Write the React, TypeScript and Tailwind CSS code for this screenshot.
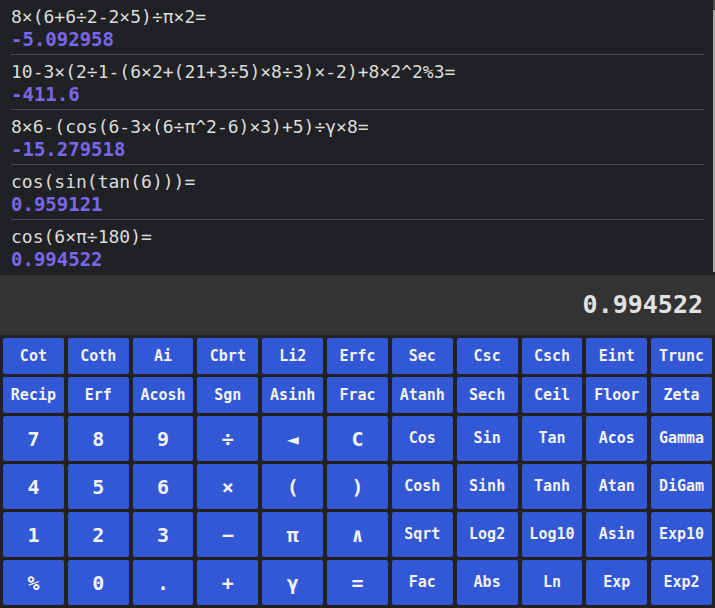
import React from "react";

const history = [
  { e: "8×(6+6÷2-2×5)÷π×2=", r: "-5.092958" },
  { e: "10-3×(2÷1-(6×2+(21+3÷5)×8÷3)×-2)+8×2^2%3=", r: "-411.6" },
  { e: "8×6-(cos(6-3×(6÷π^2-6)×3)+5)÷γ×8=", r: "-15.279518" },
  { e: "cos(sin(tan(6)))=", r: "0.959121" },
  { e: "cos(6×π÷180)=", r: "0.994522" },
];

const rows: string[][] = [
  ["Cot", "Coth", "Ai", "Cbrt", "Li2", "Erfc", "Sec", "Csc", "Csch", "Eint", "Trunc"],
  ["Recip", "Erf", "Acosh", "Sgn", "Asinh", "Frac", "Atanh", "Sech", "Ceil", "Floor", "Zeta"],
  ["7", "8", "9", "÷", "◄", "C", "Cos", "Sin", "Tan", "Acos", "Gamma"],
  ["4", "5", "6", "×", "(", ")", "Cosh", "Sinh", "Tanh", "Atan", "DiGam"],
  ["1", "2", "3", "−", "π", "∧", "Sqrt", "Log2", "Log10", "Asin", "Exp10"],
  ["%", "0", ".", "+", "γ", "=", "Fac", "Abs", "Ln", "Exp", "Exp2"],
];

const mono = { fontFamily: '"DejaVu Sans Mono", "Liberation Mono", monospace' };

export default function App() {
  return (
    <div className="w-[715px] h-[608px] flex flex-col bg-[#222222] overflow-hidden" style={mono}>
      <div className="h-[275px] flex bg-[#202124]">
        <div className="flex-1 pl-[11px] pr-[9px] overflow-hidden">
          {history.map((h, i) => (
            <div
              key={i}
              className={
                "pt-[6px] pb-[4px] " + (i < history.length - 1 ? "border-b border-[#4a4b4e]" : "")
              }
            >
              <div className="text-[18px] leading-[22px] text-[#dcdcdc] whitespace-nowrap">{h.e}</div>
              <div className="text-[19px] leading-[22px] font-bold text-[#7a66e8] whitespace-nowrap">{h.r}</div>
            </div>
          ))}
        </div>
        <div className="w-[2px] flex flex-col">
          <div className="h-[10px] bg-[#4a4a4a]" />
          <div className="h-[262px] bg-[#a8a8a8]" />
        </div>
      </div>
      <div className="h-[60px] bg-[#333333] flex items-center justify-end pr-[12px]">
        <span className="text-[25px] font-bold text-[#e2e2e2]">0.994522</span>
      </div>
      <div className="flex-1 grid grid-cols-11 grid-rows-[36px_36px_45px_45px_45px_45px] gap-x-[4px] gap-y-[3px] px-[3px] pt-[3px] pb-[3px]">
        {rows.map((row, ri) =>
          row.map((label, ci) => {
            const big = ri >= 2 && ci < 6;
            return (
              <div
                key={ri + "-" + ci}
                className={
                  "bg-[#3358d6] rounded-[2px] flex items-center justify-center font-bold text-[#f2f2f2] " +
                  (big ? "text-[20px]" : "text-[15px]")
                }
              >
                {label}
              </div>
            );
          })
        )}
      </div>
    </div>
  );
}
